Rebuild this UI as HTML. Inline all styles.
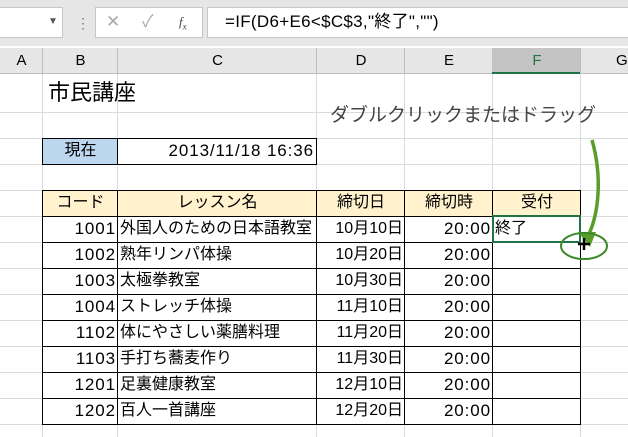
<!DOCTYPE html><html><head><meta charset="utf-8"><style>
body{margin:0;width:628px;height:437px;overflow:hidden;background:#fff;font-family:"Liberation Sans","Noto Sans CJK JP",sans-serif;position:relative}
.a{position:absolute;box-sizing:border-box}
.t{position:absolute;font-size:16px;line-height:26px;white-space:nowrap;color:#000}
.n{font-size:17px;letter-spacing:0.9px}
</style></head><body>
<div class="a" style="left:0;top:0;width:628px;height:46px;background:#e6e6e6"></div>
<div class="a" style="left:0;top:7px;width:63px;height:31px;background:#fff;border:1px solid #c6c6c6;border-left:none"></div>
<div class="t" style="left:48px;top:9px;font-size:10px;color:#555">▼</div>
<div class="t" style="left:76px;top:10px;font-size:14px;color:#777">⋮</div>
<div class="a" style="left:95px;top:7px;width:108px;height:31px;background:#fff;border:1px solid #c6c6c6"></div>
<div class="t" style="left:106px;top:9px;font-size:17px;color:#aaa">✕</div>
<div class="t" style="left:142px;top:9px;font-size:17px;color:#aaa">✓</div>
<div class="t" style="left:179px;top:9px;font-size:13px;font-style:italic;font-family:'Liberation Serif',serif;color:#444">f<sub style="font-size:9px">x</sub></div>
<div class="a" style="left:207px;top:7px;width:430px;height:31px;background:#fff;border:1px solid #c6c6c6"></div>
<div class="t" style="left:225px;top:9px;font-size:17px;letter-spacing:0.3px">=IF(D6+E6&lt;$C$3,"終了","")</div>
<div class="a" style="left:0;top:48px;width:628px;height:26px;background:#e6e6e6;border-bottom:1px solid #bdbdbd"></div>
<div class="a" style="left:492px;top:48px;width:88px;height:26px;background:#c4c4c4;border-bottom:2px solid #217346"></div>
<svg class="a" style="left:0;top:0" width="628" height="437">
<g stroke="#bdbdbd"><line x1="42.5" y1="48" x2="42.5" y2="74"/><line x1="117.5" y1="48" x2="117.5" y2="74"/><line x1="316.5" y1="48" x2="316.5" y2="74"/><line x1="404.5" y1="48" x2="404.5" y2="74"/><line x1="580.5" y1="48" x2="580.5" y2="74"/></g>
<g stroke="#dadada"><line x1="42.5" y1="74" x2="42.5" y2="437"/><line x1="117.5" y1="74" x2="117.5" y2="437"/><line x1="316.5" y1="74" x2="316.5" y2="437"/><line x1="404.5" y1="74" x2="404.5" y2="437"/><line x1="492.5" y1="74" x2="492.5" y2="437"/><line x1="580.5" y1="74" x2="580.5" y2="437"/>
<line x1="0" y1="112.5" x2="628" y2="112.5"/><line x1="0" y1="138.5" x2="628" y2="138.5"/><line x1="0" y1="164.5" x2="628" y2="164.5"/><line x1="0" y1="190.5" x2="628" y2="190.5"/><line x1="0" y1="216.5" x2="628" y2="216.5"/><line x1="0" y1="242.5" x2="628" y2="242.5"/><line x1="0" y1="268.5" x2="628" y2="268.5"/><line x1="0" y1="294.5" x2="628" y2="294.5"/><line x1="0" y1="320.5" x2="628" y2="320.5"/><line x1="0" y1="346.5" x2="628" y2="346.5"/><line x1="0" y1="372.5" x2="628" y2="372.5"/><line x1="0" y1="398.5" x2="628" y2="398.5"/><line x1="0" y1="424.5" x2="628" y2="424.5"/></g>
<rect x="43" y="139" width="74" height="25" fill="#bdd7ee"/>
<rect x="43" y="191" width="537" height="25" fill="#fff2cc"/>
<g stroke="#000" fill="none"><rect x="42.5" y="138.5" width="274" height="26"/><line x1="117.5" y1="138" x2="117.5" y2="165"/>
<rect x="42.5" y="190.5" width="538" height="234"/>
<g><line x1="117.5" y1="190" x2="117.5" y2="425"/><line x1="316.5" y1="190" x2="316.5" y2="425"/><line x1="404.5" y1="190" x2="404.5" y2="425"/><line x1="492.5" y1="190" x2="492.5" y2="425"/>
<line x1="42" y1="216.5" x2="581" y2="216.5"/><line x1="42" y1="242.5" x2="581" y2="242.5"/><line x1="42" y1="268.5" x2="581" y2="268.5"/><line x1="42" y1="294.5" x2="581" y2="294.5"/><line x1="42" y1="320.5" x2="581" y2="320.5"/><line x1="42" y1="346.5" x2="581" y2="346.5"/><line x1="42" y1="372.5" x2="581" y2="372.5"/><line x1="42" y1="398.5" x2="581" y2="398.5"/></g></g>
<rect x="493" y="216" width="87" height="26" fill="none" stroke="#217346" stroke-width="2"/>
<path d="M592 140 C602 175 600 215 586 240" stroke="#5a9e2a" stroke-width="3.5" fill="none"/>
<path d="M578 232 L590 247 L596 232 Z" fill="#5a9e2a"/>
<ellipse cx="584" cy="246" rx="23" ry="13" fill="none" stroke="#3a8a2a" stroke-width="2"/>
<path d="M578 244 h12 M584 238 v12" stroke="#000" stroke-width="2.5"/>
</svg>
<div class="t" style="left:0;top:48px;width:43px;text-align:center;font-size:15px">A</div>
<div class="t" style="left:43px;top:48px;width:75px;text-align:center;font-size:15px">B</div>
<div class="t" style="left:118px;top:48px;width:199px;text-align:center;font-size:15px">C</div>
<div class="t" style="left:317px;top:48px;width:88px;text-align:center;font-size:15px">D</div>
<div class="t" style="left:405px;top:48px;width:88px;text-align:center;font-size:15px">E</div>
<div class="t" style="left:493px;top:48px;width:88px;text-align:center;font-size:15px;color:#217346">F</div>
<div class="t" style="left:616px;top:48px;font-size:15px">G</div>
<div class="t" style="left:48px;top:78px;font-size:22px;line-height:30px">市民講座</div>
<div class="t" style="left:330px;top:103px;font-size:19px;color:#444">ダブルクリックまたはドラッグ</div>
<div class="t" style="left:43px;top:138px;width:75px;text-align:center">現在</div>
<div class="t n" style="left:118px;top:138px;width:196px;text-align:right">2013/11/18 16:36</div>
<div class="t" style="left:43px;top:190px;width:75px;text-align:center">コード</div>
<div class="t" style="left:118px;top:190px;width:199px;text-align:center">レッスン名</div>
<div class="t" style="left:317px;top:190px;width:88px;text-align:center">締切日</div>
<div class="t" style="left:405px;top:190px;width:88px;text-align:center">締切時</div>
<div class="t" style="left:493px;top:190px;width:88px;text-align:center">受付</div>
<div class="t" style="left:495px;top:216px">終了</div>
<div style="position:absolute;left:43px;top:216px">
<div class="t n" style="top:0;width:73px;text-align:right">1001</div><div class="t n" style="top:26px;width:73px;text-align:right">1002</div><div class="t n" style="top:52px;width:73px;text-align:right">1003</div><div class="t n" style="top:78px;width:73px;text-align:right">1004</div><div class="t n" style="top:104px;width:73px;text-align:right">1102</div><div class="t n" style="top:130px;width:73px;text-align:right">1103</div><div class="t n" style="top:156px;width:73px;text-align:right">1201</div><div class="t n" style="top:182px;width:73px;text-align:right">1202</div>
</div>
<div style="position:absolute;left:120px;top:216px">
<div class="t" style="top:0">外国人のための日本語教室</div><div class="t" style="top:26px">熟年リンパ体操</div><div class="t" style="top:52px">太極拳教室</div><div class="t" style="top:78px">ストレッチ体操</div><div class="t" style="top:104px">体にやさしい薬膳料理</div><div class="t" style="top:130px">手打ち蕎麦作り</div><div class="t" style="top:156px">足裏健康教室</div><div class="t" style="top:182px">百人一首講座</div>
</div>
<div style="position:absolute;left:317px;top:216px">
<div class="t" style="top:0;width:86px;text-align:right">10月10日</div><div class="t" style="top:26px;width:86px;text-align:right">10月20日</div><div class="t" style="top:52px;width:86px;text-align:right">10月30日</div><div class="t" style="top:78px;width:86px;text-align:right">11月10日</div><div class="t" style="top:104px;width:86px;text-align:right">11月20日</div><div class="t" style="top:130px;width:86px;text-align:right">11月30日</div><div class="t" style="top:156px;width:86px;text-align:right">12月10日</div><div class="t" style="top:182px;width:86px;text-align:right">12月20日</div>
</div>
<div style="position:absolute;left:405px;top:216px">
<div class="t n" style="top:0;width:86px;text-align:right">20:00</div><div class="t n" style="top:26px;width:86px;text-align:right">20:00</div><div class="t n" style="top:52px;width:86px;text-align:right">20:00</div><div class="t n" style="top:78px;width:86px;text-align:right">20:00</div><div class="t n" style="top:104px;width:86px;text-align:right">20:00</div><div class="t n" style="top:130px;width:86px;text-align:right">20:00</div><div class="t n" style="top:156px;width:86px;text-align:right">20:00</div><div class="t n" style="top:182px;width:86px;text-align:right">20:00</div>
</div>
</body></html>
